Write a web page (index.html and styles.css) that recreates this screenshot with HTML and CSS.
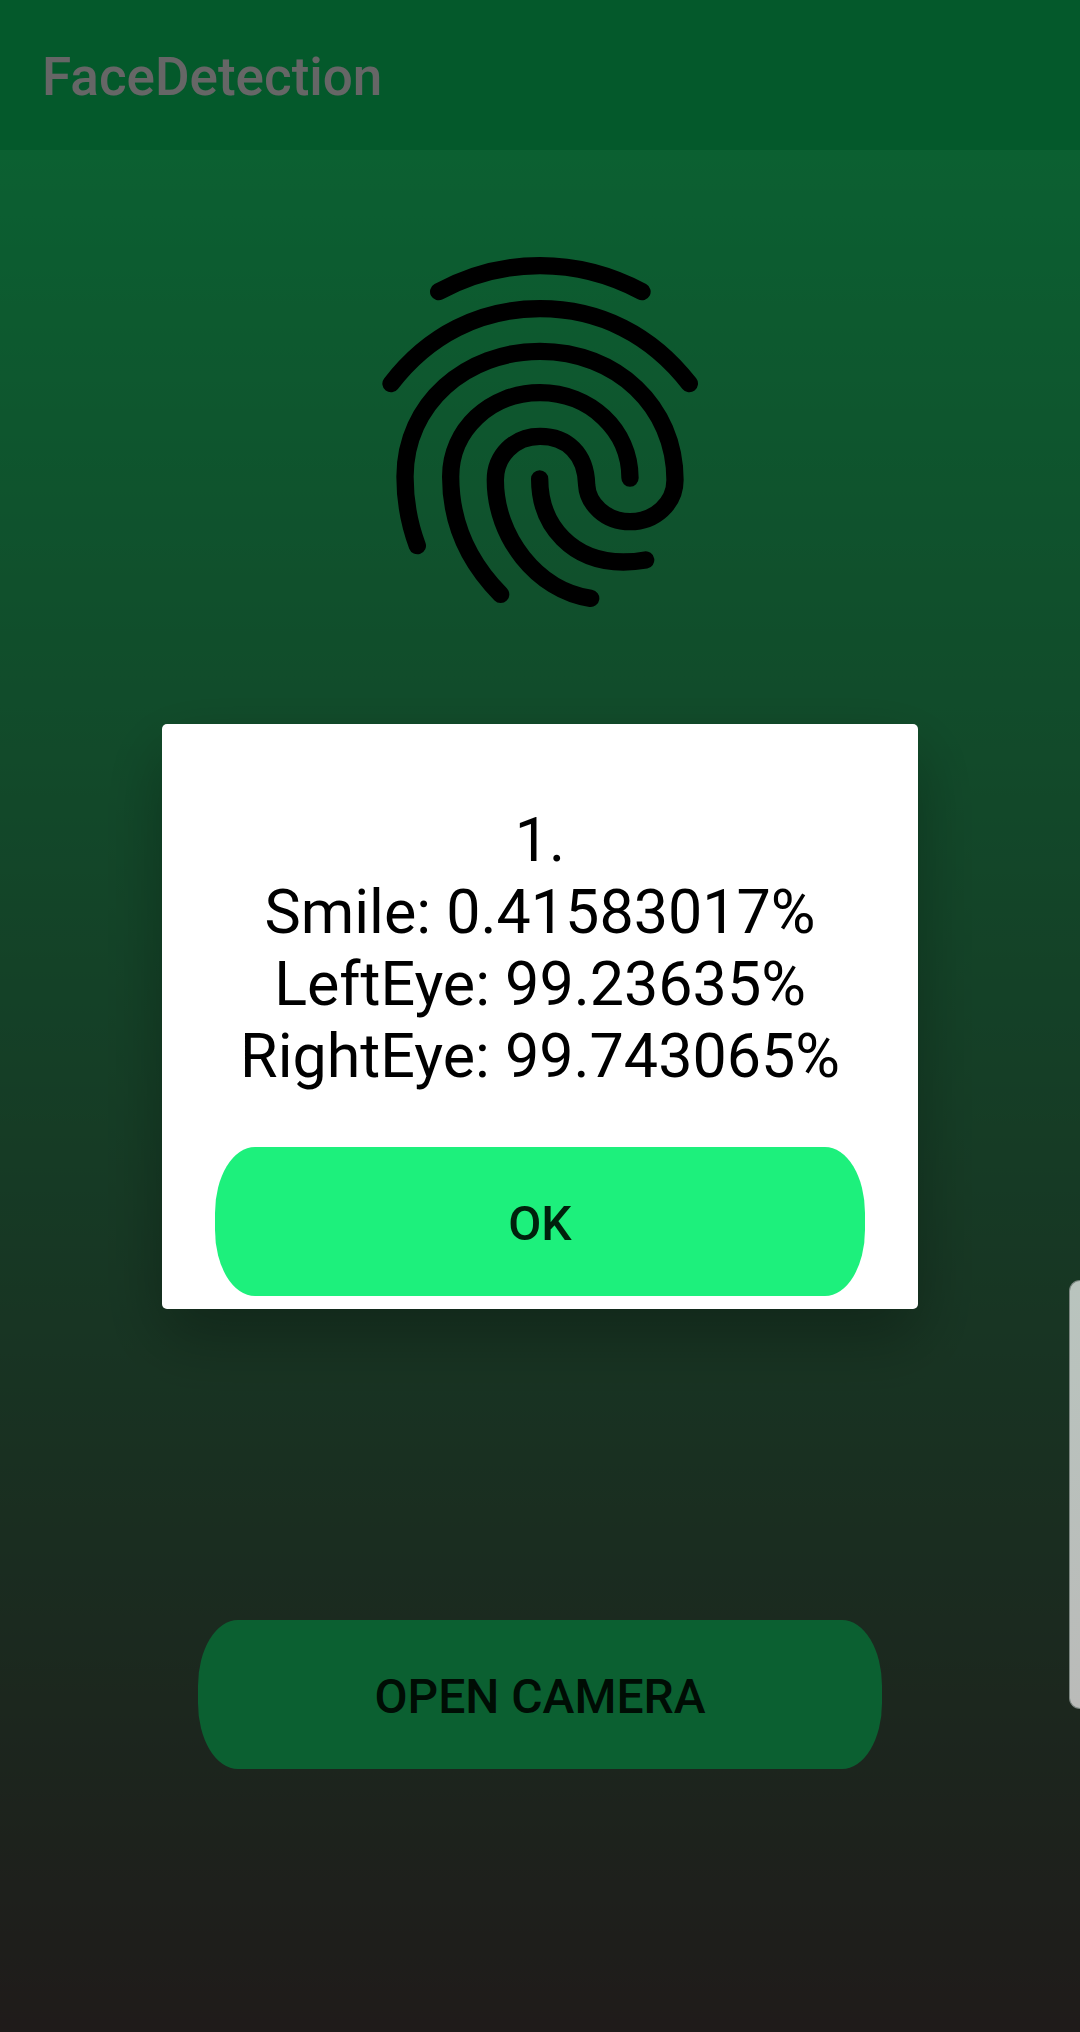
FILE: index.html
```html
<!DOCTYPE html>
<html lang="en">
<head>
<meta charset="utf-8">
<meta name="viewport" content="width=device-width, initial-scale=1">
<title>FaceDetection</title>
<link rel="stylesheet" href="styles.css">
</head>
<body>
<div class="app">
  <header class="app-bar"><h1 class="app-title">FaceDetection</h1></header>
  <main class="content">
    <svg class="fingerprint" viewBox="0 0 1080 1140" aria-hidden="true">
      <path d="M236 155Q380 77 540 77T846 155"/>
      <path d="M93 431C205 285 360 206 540 206S875 285 988 431"/>
      <path d="M172 917C147 850 135 790 135 710C135 490 320 334 540 334C770 334 945 500 945 720C945 790 885 845 810 845C735 845 683 790 680 735C678 640 620 589 540 589C460 589 406 650 406 720C406 890 530 1050 692 1075"/>
      <path d="M422 1063C320 960 272 840 272 710C272 570 390 458 540 458C690 458 810 570 810 714"/>
      <path d="M539 717C539 860 640 966 790 966Q825 966 857 960"/>
    </svg>
    <button class="btn" type="button">OPEN CAMERA</button>
  </main>
</div>
<div class="scrim">
  <section class="dialog" role="dialog" aria-modal="true" aria-labelledby="result">
    <p class="result" id="result">1.<br>Smile: 0.41583017%<br>LeftEye: 99.23635%<br>RightEye: 99.743065%</p>
    <button class="btn" type="button">OK</button>
  </section>
</div>
<div class="edge-handle"></div>
</body>
</html>
```
FILE: styles.css
```css
* {
  box-sizing: border-box;
}

body {
  margin: 0;
  font-family: Roboto, "Liberation Sans", sans-serif;
  color: #000;
}

.app {
  display: flex;
  flex-direction: column;
  min-height: 100vh;
}

.app-bar {
  display: flex;
  align-items: center;
  height: 150px;
  padding: 4px 42px 0;
  background: #0ade6c;
}

.app-title {
  margin: 0;
  font-size: 53px;
  font-weight: 500;
  line-height: 64px;
  color: #fff;
}

.content {
  flex: 1;
  display: flex;
  flex-direction: column;
  align-items: center;
  justify-content: space-between;
  gap: 48px;
  padding: 90px 198px 263px;
  background: linear-gradient(#1df07c, #4f4442);
}

.fingerprint {
  width: 360px;
  height: 380px;
  fill: none;
  stroke: #000;
  stroke-width: 52;
  stroke-linecap: round;
  stroke-linejoin: round;
}

.btn {
  width: 100%;
  height: 149px;
  padding: 4px 0 0;
  border: 0;
  border-radius: 40px / 66px;
  background: #1df07c;
  color: #00210c;
  font-family: inherit;
  font-size: 48px;
  font-weight: 500;
}

.scrim {
  position: fixed;
  inset: 0;
  display: grid;
  place-items: center;
  background: rgba(0, 0, 0, 0.6);
}

.dialog {
  width: 70%;
  padding: 80px 53px 13px;
  border-radius: 5px;
  background: #fff;
  box-shadow: 0 28px 64px rgba(0, 0, 0, 0.28);
}

.result {
  margin: 0 0 55px;
  font-size: 61px;
  line-height: 72px;
  text-align: center;
}

.edge-handle {
  position: fixed;
  top: 63%;
  right: 0;
  width: 11px;
  height: 429px;
  border: 1px solid #7b8580;
  border-right: 0;
  border-radius: 14px 0 0 14px;
  background: linear-gradient(#b9c4be, #babbb9);
}
```
